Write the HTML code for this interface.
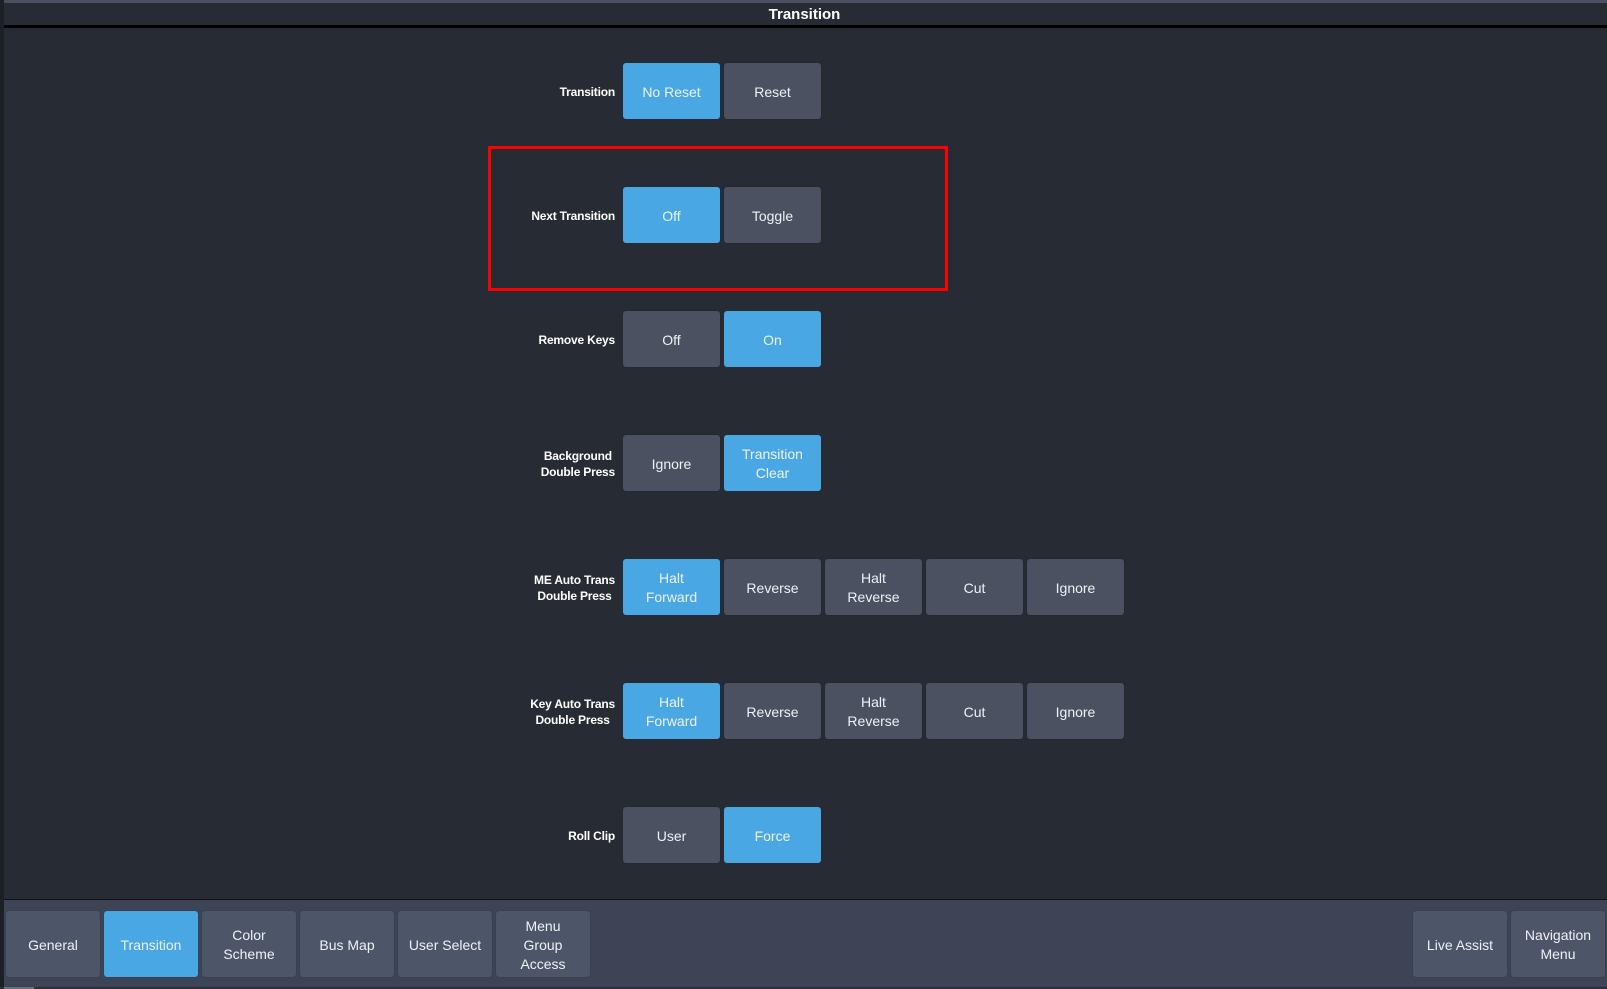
<!DOCTYPE html>
<html><head><meta charset="utf-8"><style>
*{margin:0;padding:0;box-sizing:border-box}
body{width:1607px;height:989px;background:#272b33;font-family:"Liberation Sans",sans-serif;position:relative;overflow:hidden;color:#eef2f6}
.abs{position:absolute}
.btn{position:absolute;width:97px;height:56px;border-radius:3px;display:flex;align-items:center;justify-content:center;text-align:center;font-size:14px;line-height:19px;color:#eef2f6;padding-top:2px}
.b{background:#49a7e3}
.g{background:#4b5160;box-shadow:0 0 1px #1c1f25}
.lbl{position:absolute;right:992px;width:140px;text-align:right;font-size:12px;font-weight:bold;line-height:16px;color:#fff;display:flex;align-items:center;justify-content:flex-end;height:56px;padding-top:2px;letter-spacing:-0.2px}
.nb{position:absolute;top:911px;width:94px;height:66px;border-radius:3px;display:flex;align-items:center;justify-content:center;text-align:center;font-size:14px;line-height:19px;background:#4d5569;color:#eef2f6;box-shadow:0 0 1px #2a2f3a;padding-top:2px}
</style></head><body>
<div class="abs" style="left:0;top:0;width:1607px;height:3px;background:#4a5062"></div>
<div class="abs" style="left:0;top:25px;width:1607px;height:3px;background:#000"></div>
<div class="abs" style="left:0;top:0;width:4px;height:989px;background:#1d2126"></div>
<div class="abs" style="left:0;top:4px;width:1607px;height:22px;text-align:center;font-size:15px;font-weight:bold;line-height:22px;color:#fff;padding-left:2px">Transition</div>

<div class="abs" style="left:488px;top:146px;width:460px;height:145px;border:3px solid #f00"></div>

<div class="lbl" style="top:63px">Transition</div>
<div class="btn b" style="left:623px;top:63px">No Reset</div>
<div class="btn g" style="left:724px;top:63px">Reset</div>

<div class="lbl" style="top:187px">Next Transition</div>
<div class="btn b" style="left:623px;top:187px">Off</div>
<div class="btn g" style="left:724px;top:187px">Toggle</div>

<div class="lbl" style="top:311px">Remove Keys</div>
<div class="btn g" style="left:623px;top:311px">Off</div>
<div class="btn b" style="left:724px;top:311px">On</div>

<div class="lbl" style="top:435px"><span style="text-align:center">Background<br>Double Press</span></div>
<div class="btn g" style="left:623px;top:435px">Ignore</div>
<div class="btn b" style="left:724px;top:435px">Transition<br>Clear</div>

<div class="lbl" style="top:559px"><span style="text-align:center">ME Auto Trans<br>Double Press</span></div>
<div class="btn b" style="left:623px;top:559px">Halt<br>Forward</div>
<div class="btn g" style="left:724px;top:559px">Reverse</div>
<div class="btn g" style="left:825px;top:559px">Halt<br>Reverse</div>
<div class="btn g" style="left:926px;top:559px">Cut</div>
<div class="btn g" style="left:1027px;top:559px">Ignore</div>

<div class="lbl" style="top:683px"><span style="text-align:center">Key Auto Trans<br>Double Press</span></div>
<div class="btn b" style="left:623px;top:683px">Halt<br>Forward</div>
<div class="btn g" style="left:724px;top:683px">Reverse</div>
<div class="btn g" style="left:825px;top:683px">Halt<br>Reverse</div>
<div class="btn g" style="left:926px;top:683px">Cut</div>
<div class="btn g" style="left:1027px;top:683px">Ignore</div>

<div class="lbl" style="top:807px">Roll Clip</div>
<div class="btn g" style="left:623px;top:807px">User</div>
<div class="btn b" style="left:724px;top:807px">Force</div>

<div class="abs" style="left:4px;top:899px;width:1603px;height:90px;background:#3d4455;border-top:1px solid #111"></div>
<div class="abs" style="left:0;top:987px;width:1607px;height:2px;background:#2a2f3a"></div>
<div class="abs" style="left:4px;top:987px;width:30px;height:2px;background:#6a7080"></div>
<div class="nb" style="left:6px">General</div>
<div class="nb" style="left:104px;background:#49a7e3">Transition</div>
<div class="nb" style="left:202px">Color<br>Scheme</div>
<div class="nb" style="left:300px">Bus Map</div>
<div class="nb" style="left:398px">User Select</div>
<div class="nb" style="left:496px">Menu<br>Group<br>Access</div>
<div class="nb" style="left:1413px">Live Assist</div>
<div class="nb" style="left:1511px">Navigation<br>Menu</div>
</body></html>
